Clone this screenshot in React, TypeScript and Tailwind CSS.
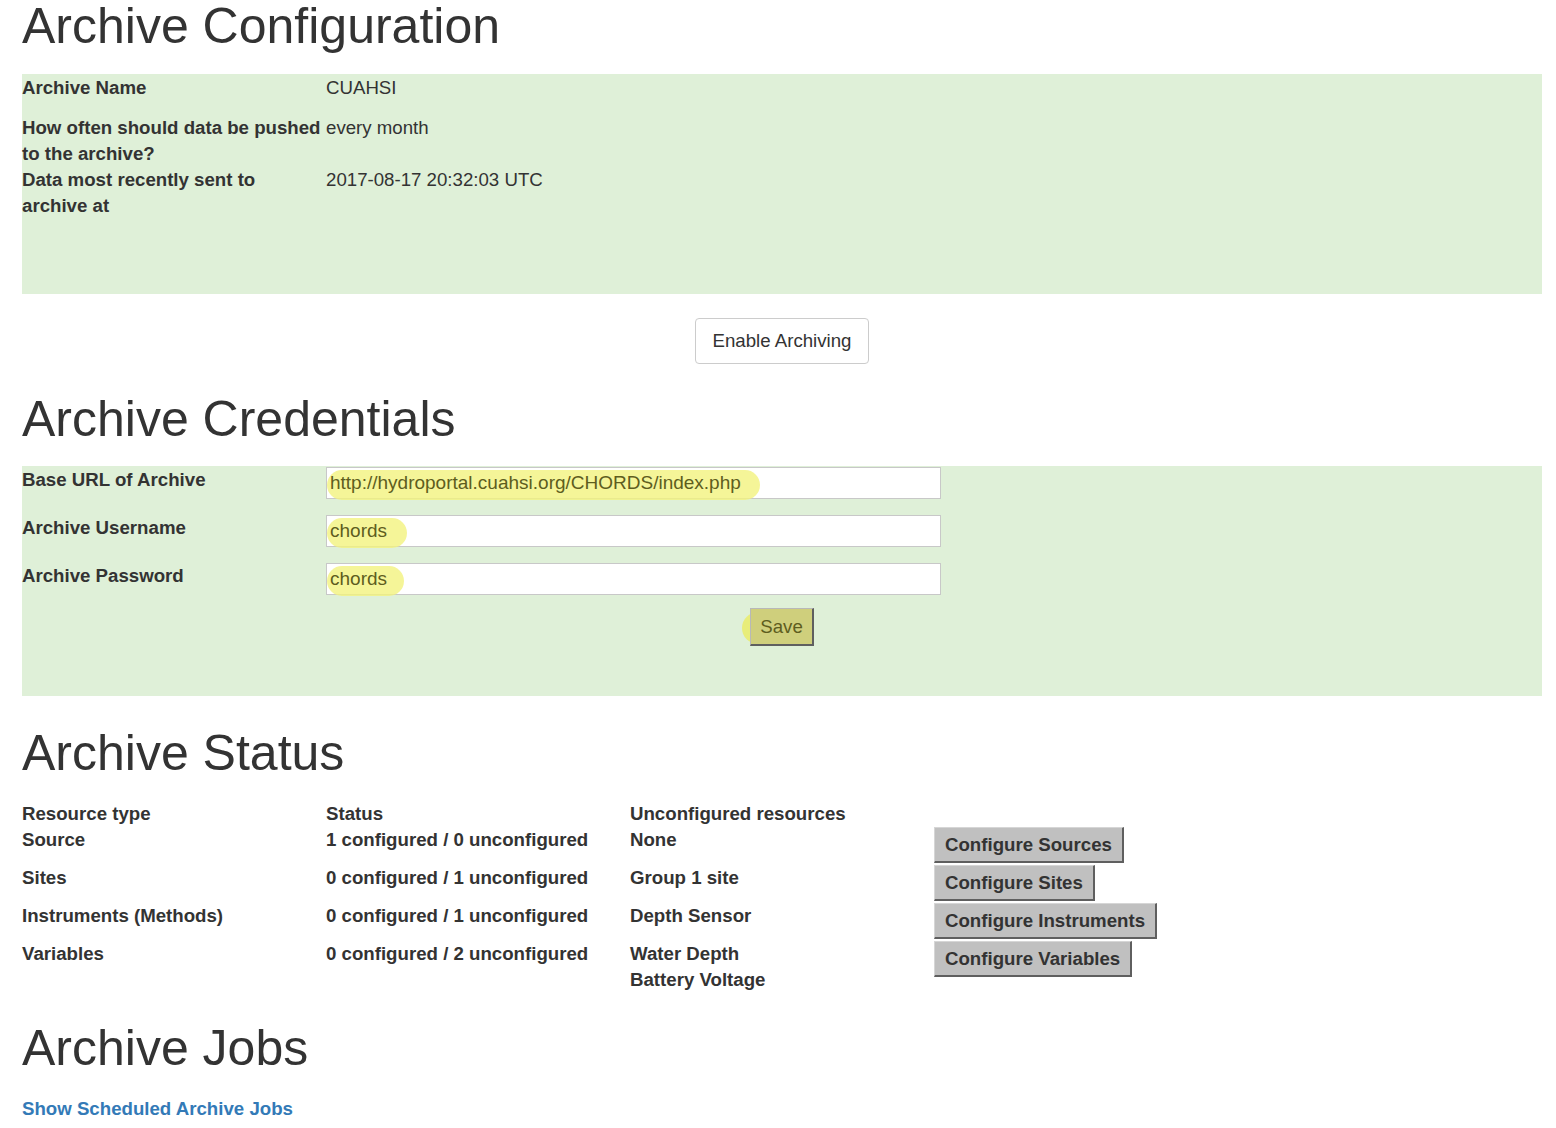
import React from "react";

const ConfigButton = ({ label }: { label: string }) => (
  <div className="h-[38px]">
    <button className="h-[36px] px-[10px] bg-[#c0c0c0] border-t border-l border-t-[#d6d6d6] border-l-[#d6d6d6] border-r-2 border-b-2 border-r-[#5f5f5f] border-b-[#5f5f5f] font-bold text-[#333] leading-[26px] text-[18.67px]">
      {label}
    </button>
  </div>
);

export default function App() {
  const h1 = "text-[50px] leading-[53px] font-normal text-[#333]";
  return (
    <div
      className="pl-[22px] pr-[14px] text-[18.67px] leading-[26px] text-[#333] bg-white min-h-[1128px]"
      style={{ fontFamily: '"Liberation Sans", Arial, Helvetica, sans-serif' }}
    >
      <h1 className={h1}>Archive Configuration</h1>

      <div className="mt-[21px] bg-[#dff0d8] h-[220px] pt-[1px]">
        <div className="grid grid-cols-[304px_1fr] h-[40px]">
          <div className="font-bold pr-[2px]">Archive Name</div>
          <div>CUAHSI</div>
        </div>
        <div className="grid grid-cols-[304px_1fr]">
          <div className="font-bold pr-[2px]">How often should data be pushed to the archive?</div>
          <div>every month</div>
        </div>
        <div className="grid grid-cols-[304px_1fr]">
          <div className="font-bold pr-[2px]">Data most recently sent to archive at</div>
          <div>2017-08-17 20:32:03 UTC</div>
        </div>
      </div>

      <div className="flex justify-center mt-[24px]">
        <button className="h-[46px] px-[17px] border border-[#cccccc] rounded-[4px] bg-white text-[#333] text-[18.67px]">
          Enable Archiving
        </button>
      </div>

      <h1 className={h1 + " mt-[29px]"}>Archive Credentials</h1>

      <div className="mt-[20px] bg-[#dff0d8] h-[230px]">
        {[
          { label: "Base URL of Archive", value: "http://hydroportal.cuahsi.org/CHORDS/index.php", w: "w-[433px]" },
          { label: "Archive Username", value: "chords", w: "w-[80px]" },
          { label: "Archive Password", value: "chords", w: "w-[77px]" },
        ].map((r) => (
          <div key={r.label} className="grid grid-cols-[304px_1fr] h-[48px]">
            <div className="font-bold leading-[26px] pt-[1px]">{r.label}</div>
            <div className="pt-[1px]">
              <div className="relative w-[615px] h-[32px] bg-white border border-[#c8c8c8] flex items-center">
                <span
                  className={
                    "absolute left-0 top-[2px] h-[30px] rounded-full bg-[#f2f37e] opacity-80 " + r.w
                  }
                />
                <span className="relative pl-[3px] text-[#5e5d1e] text-[19px]">{r.value}</span>
              </div>
            </div>
          </div>
        ))}
        <div className="flex justify-center -mt-[2px]">
          <span className="relative inline-block">
            <span className="absolute left-[-8px] top-[4px] w-[70px] h-[32px] rounded-full bg-[#e9ec70] opacity-90" />
            <button className="relative h-[38px] w-[64px] bg-[#cfcf7c] border-t border-l border-t-[#b8b8b8] border-l-[#b8b8b8] border-r-2 border-b-2 border-r-[#5f5f5f] border-b-[#5f5f5f] text-[#5e5d1e] text-[18.67px]">
              Save
            </button>
          </span>
        </div>
      </div>

      <h1 className={h1 + " mt-[31px]"}>Archive Status</h1>

      <div className="mt-[21px] grid grid-cols-[304px_304px_304px_1fr] font-bold">
        <div className="h-[25px]">Resource type</div>
        <div>Status</div>
        <div>Unconfigured resources</div>
        <div />

        <div className="h-[38px]">Source</div>
        <div>1 configured / 0 unconfigured</div>
        <div>None</div>
        <ConfigButton label="Configure Sources" />

        <div className="h-[38px]">Sites</div>
        <div>0 configured / 1 unconfigured</div>
        <div>Group 1 site</div>
        <ConfigButton label="Configure Sites" />

        <div className="h-[38px]">Instruments (Methods)</div>
        <div>0 configured / 1 unconfigured</div>
        <div>Depth Sensor</div>
        <ConfigButton label="Configure Instruments" />

        <div>Variables</div>
        <div>0 configured / 2 unconfigured</div>
        <div>
          Water Depth
          <br />
          Battery Voltage
        </div>
        <ConfigButton label="Configure Variables" />
      </div>

      <h1 className={h1 + " mt-[29px]"}>Archive Jobs</h1>

      <div className="mt-[21px]">
        <a href="#" className="font-bold text-[#337ab7]">
          Show Scheduled Archive Jobs
        </a>
      </div>
    </div>
  );
}
